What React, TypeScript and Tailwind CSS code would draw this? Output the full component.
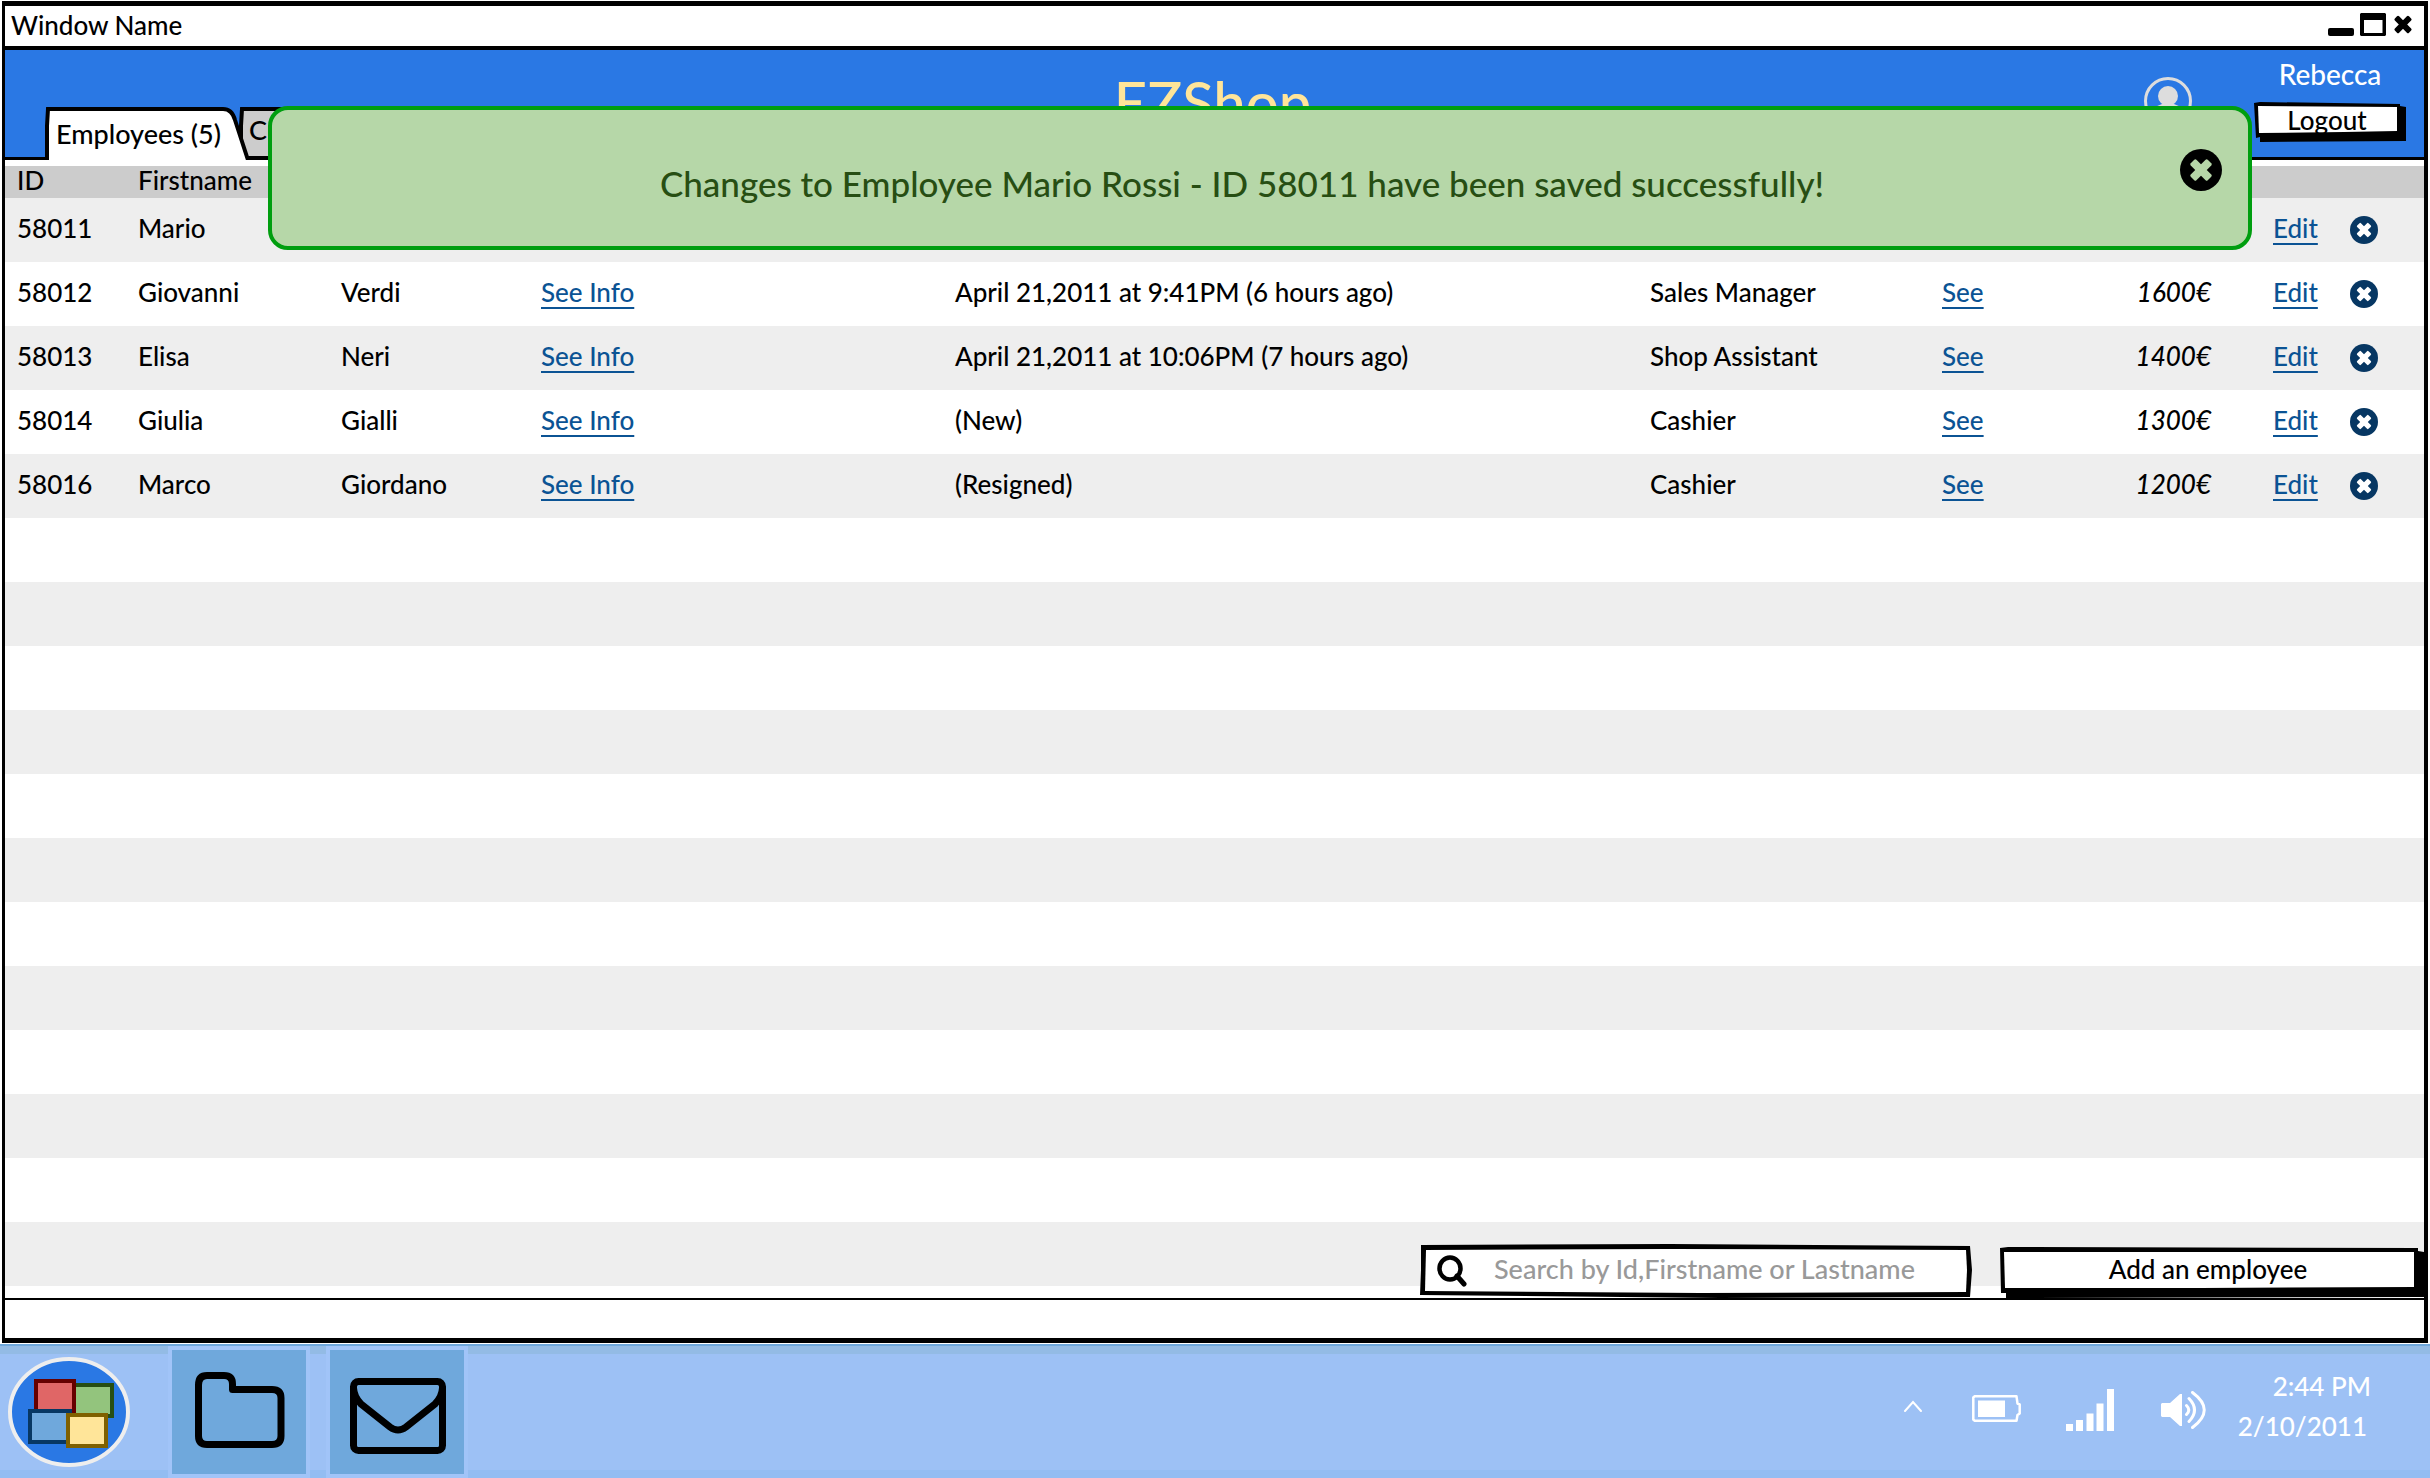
import React from 'react';

type Employee = {
  id: string;
  first: string;
  last: string;
  activity: string;
  role: string;
  salary: string;
};

const employees: Employee[] = [
  { id: '58011', first: 'Mario', last: 'Rossi', activity: '', role: '', salary: '' },
  { id: '58012', first: 'Giovanni', last: 'Verdi', activity: 'April 21,2011 at 9:41PM (6 hours ago)', role: 'Sales Manager', salary: '1600€' },
  { id: '58013', first: 'Elisa', last: 'Neri', activity: 'April 21,2011 at 10:06PM (7 hours ago)', role: 'Shop Assistant', salary: '1400€' },
  { id: '58014', first: 'Giulia', last: 'Gialli', activity: '(New)', role: 'Cashier', salary: '1300€' },
  { id: '58016', first: 'Marco', last: 'Giordano', activity: '(Resigned)', role: 'Cashier', salary: '1200€' },
];

const emptyRows = Array.from({ length: 12 }, (_, i) => i);

function CircleX({ className, cross }: { className: string; cross: string }) {
  return (
    <svg viewBox="0 0 42 42" className={className} aria-hidden="true">
      <circle cx="21" cy="21" r="21" fill="currentColor" />
      <g fill={cross}>
        <rect x="9" y="17" width="24" height="8" rx="1.5" transform="rotate(45 21 21)" />
        <rect x="9" y="17" width="24" height="8" rx="1.5" transform="rotate(-45 21 21)" />
      </g>
    </svg>
  );
}

function TextLink({ children }: { children: React.ReactNode }) {
  return (
    <a href="#" className="text-[#0b5394] underline decoration-2 underline-offset-[5px]">
      {children}
    </a>
  );
}

function TitleBar() {
  return (
    <div className="flex h-11 items-center justify-between border-b-4 border-black bg-white pr-1.5 pb-0.5 pl-1.5">
      <span>Window Name</span>
      <div className="flex items-center gap-1.5">
        <button aria-label="Minimize" className="h-[26px] w-[26px]">
          <svg viewBox="0 0 26 26" aria-hidden="true">
            <rect x="0" y="16" width="26" height="8" rx="2" />
          </svg>
        </button>
        <button aria-label="Maximize" className="h-[26px] w-[26px]">
          <svg viewBox="0 0 26 26" aria-hidden="true">
            <path fillRule="evenodd" d="M1 1H25L26 2V23L25 24H1L0 23V2ZM4 8V21H22.500V8Z" />
          </svg>
        </button>
        <button aria-label="Close window" className="h-[26px] w-[26px]">
          <svg viewBox="0 0 26 26" aria-hidden="true">
            <rect x="1" y="9.500" width="20" height="6" rx="1.500" transform="rotate(45 11 12.500)" />
            <rect x="1" y="9.500" width="20" height="6" rx="1.500" transform="rotate(-45 11 12.500)" />
          </svg>
        </button>
      </div>
    </div>
  );
}

function Header() {
  return (
    <header className="relative flex h-[110px] items-end justify-between border-b-[3px] border-black bg-[#2a78e4]">
      <nav className="-mb-[3px] flex pl-10">
        <button className="relative z-10 flex h-[54px] w-[206px] items-center pt-0.5 pl-[11px] text-[27px]">
          <svg viewBox="0 0 206 54" className="absolute inset-0 h-full w-full" aria-hidden="true">
            <path d="M2 54V20L3 3H178Q187 3 190 14L203 54Z" fill="#fff" />
            <path d="M2 54V20L3 3H178Q187 3 190 14L203 54" fill="none" stroke="#000" strokeWidth="4" />
          </svg>
          <span className="relative">Employees (5)</span>
        </button>
        <button className="relative -ml-3 flex h-[54px] w-[206px] items-center pb-1.5 pl-[10px] text-[27px]">
          <svg viewBox="0 0 206 54" className="absolute inset-0 h-full w-full" aria-hidden="true">
            <path d="M2 52V20L3 3H178Q187 3 190 14L203 52Z" fill="#ccc" stroke="#000" strokeWidth="4" />
          </svg>
          <span className="relative">Customers</span>
        </button>
      </nav>
      <h1 className="absolute inset-x-0 top-4 pr-1 text-center text-[58px] leading-[72px] font-medium text-[#ffe599]">EZShop</h1>
      <div className="flex h-full items-start pr-[18px]">
        <svg viewBox="0 0 48 48" className="mt-[27px] mr-[62px] h-12 w-12" fill="none" aria-hidden="true">
          <circle cx="24" cy="24" r="22.500" stroke="#ddd" strokeWidth="3" />
          <circle cx="24" cy="19" r="10" fill="#ddd" />
          <path d="M9 39Q10 29 18 27H30Q38 29 39 39Q24 52 9 39Z" fill="#ddd" />
        </svg>
        <div className="flex flex-col items-center">
          <span className="mt-2 text-[28px] leading-8 text-white">Rebecca</span>
          <button className="relative mt-3 h-10 w-[152px] pr-1.5 pb-1">
            <svg viewBox="0 0 152 40" preserveAspectRatio="none" className="absolute inset-0 h-full w-full" aria-hidden="true">
              <path d="M0 1L6 0L146 2V4L152 5V39L6 40V35L2 36Z" />
              <path d="M4 4L143 5V29L90 30L5 31Z" fill="#fff" />
            </svg>
            <span className="relative">Logout</span>
          </button>
        </div>
      </div>
    </header>
  );
}

function EmployeeTable() {
  return (
    <table className="w-full table-fixed border-collapse text-left">
      <colgroup>
        <col className="w-[121px]" />
        <col className="w-[203px]" />
        <col className="w-[200px]" />
        <col className="w-[414px]" />
        <col />
        <col className="w-[292px]" />
        <col className="w-[151px]" />
        <col className="w-[180px]" />
        <col className="w-[77px]" />
        <col className="w-[86px]" />
      </colgroup>
      <thead>
        <tr className="h-8 bg-[#ccc]">
          <th className="pb-1 pl-3 leading-7 font-medium">ID</th>
          <th className="pb-1 pl-3 leading-7 font-medium">Firstname</th>
          <th className="pb-1 pl-3 leading-7 font-medium">Lastname</th>
          <th aria-label="Information" />
          <th aria-label="Last activity" />
          <th aria-label="Role" />
          <th aria-label="Details" />
          <th aria-label="Salary" />
          <th aria-label="Edit" />
          <th aria-label="Remove" />
        </tr>
      </thead>
      <tbody>
        {employees.map((e) => (
          <tr key={e.id} className="h-16 odd:bg-[#eee]">
            <td className="pb-1 pl-3">{e.id}</td>
            <td className="pb-1 pl-3">{e.first}</td>
            <td className="pb-1 pl-3">{e.last}</td>
            <td className="pb-1 pl-3"><TextLink>See Info</TextLink></td>
            <td className="pb-1 pl-3">{e.activity}</td>
            <td className="pb-1 pl-3">{e.role}</td>
            <td className="pb-1 pl-3"><TextLink>See</TextLink></td>
            <td className="pr-[50px] pb-1 text-right italic">{e.salary}</td>
            <td className="pb-1 pl-3"><TextLink>Edit</TextLink></td>
            <td className="pl-3">
              <button aria-label={`Remove ${e.first}`} className="block text-[#073763]">
                <CircleX className="h-7 w-7" cross="#fff" />
              </button>
            </td>
          </tr>
        ))}
        {emptyRows.map((i) => (
          <tr key={i} className="h-16 odd:bg-[#eee]">
            <td colSpan={10} />
          </tr>
        ))}
      </tbody>
    </table>
  );
}

function Actions() {
  return (
    <div className="relative -mt-[42px] flex h-[54px] items-start justify-end gap-7">
      <label className="relative flex h-[54px] w-[552px] items-center pl-[17px]">
        <svg viewBox="0 0 552 54" preserveAspectRatio="none" className="absolute inset-0 h-full w-full" aria-hidden="true">
          <path d="M1 1L250 0L550 2L552 26L550 53L300 54L0 51L1 26Z" />
          <path d="M6 6L250 5L546 6L547 26L546 48L280 49L5 47Z" fill="#fff" />
        </svg>
        <svg viewBox="0 0 30 32" className="relative h-8 w-[30px]" fill="none" stroke="#000" aria-hidden="true">
          <ellipse cx="13" cy="13.500" rx="10.500" ry="11" strokeWidth="4.500" />
          <path d="M20 21L27 29" strokeWidth="5" strokeLinecap="round" />
        </svg>
        <input
          type="text"
          aria-label="Search employees"
          placeholder="Search by Id,Firstname or Lastname"
          className="relative ml-[27px] w-[440px] bg-transparent pb-1 text-[27px] outline-none placeholder:text-[#999]"
        />
      </label>
      <button className="relative mt-[3px] h-[51px] w-[424px] pr-2 pb-2">
        <svg viewBox="0 0 424 51" preserveAspectRatio="none" className="absolute inset-0 h-full w-full" aria-hidden="true">
          <path d="M0 1L8 0L418 1V4L424 5V50L6 51V46H1Z" />
          <path d="M4 5L414 5V40L200 41L5 41Z" fill="#fff" />
        </svg>
        <span className="relative">Add an employee</span>
      </button>
    </div>
  );
}

function SuccessBanner() {
  return (
    <div
      role="alert"
      className="absolute top-[106px] right-[178px] left-[268px] z-20 flex h-36 items-center rounded-[20px] border-4 border-[#009e0f] bg-[#b6d7a8] pr-[26px]"
    >
      <p className="flex-1 pt-2.5 pl-8 text-center text-[35px] text-[#274e13]">
        Changes to Employee Mario Rossi - ID 58011 have been saved successfully!
      </p>
      <button aria-label="Dismiss" className="mb-4">
        <CircleX className="h-[42px] w-[42px]" cross="#b6d7a8" />
      </button>
    </div>
  );
}

function Taskbar() {
  return (
    <footer className="mt-px flex grow items-stretch justify-between border-t-2 border-[#6fa8dc] bg-[#9dc1f5] bg-[linear-gradient(#93bbe5_0_8px,#9dc1f5_8px_124px,#93bdf2_124px)] text-white">
      <div className="flex gap-4 pl-2">
        <button aria-label="Start" className="mr-[22px] w-[122px]">
          <svg viewBox="0 0 122 110" className="w-full" strokeWidth="4" aria-hidden="true">
            <ellipse cx="61" cy="55" rx="59" ry="53" fill="#2a78e4" stroke="#eee" />
            <rect x="66" y="28" width="38" height="31" fill="#93c47d" stroke="#274e13" />
            <rect x="28" y="24" width="38" height="32" fill="#e06666" stroke="#660000" />
            <rect x="22" y="54" width="40" height="31" fill="#6fa8dc" stroke="#073763" />
            <rect x="60" y="58" width="38" height="31" fill="#ffe599" stroke="#7f6000" />
          </svg>
        </button>
        <button aria-label="Files" className="flex h-[132px] w-[142px] items-center justify-center border-4 border-[#a1c4f8] bg-[#6fa8dc]">
          <svg viewBox="0 0 90 76" className="mb-1 ml-0.5 h-[76px] w-[90px]" fill="none" stroke="#000" strokeWidth="7" strokeLinejoin="round" aria-hidden="true">
            <path d="M3.500 13Q3.500 3.500 12 3.500H29Q37.500 3.500 37.500 12V17.500H77Q86 17.500 86 26V64Q86 72.500 77 72.500H12Q3.500 72.500 3.500 64Z" />
          </svg>
        </button>
        <button aria-label="Mail" className="flex h-[132px] w-[142px] items-center justify-center border-4 border-[#a1c4f8] bg-[#6fa8dc]">
          <svg viewBox="0 0 96 76" className="mt-2 ml-0.5 h-[76px] w-24" fill="none" stroke="#000" strokeWidth="7" strokeLinejoin="round" aria-hidden="true">
            <rect x="3.500" y="3.500" width="89" height="69" rx="5" />
            <path d="M3.500 10Q4 19 11 26L40 49Q48 55 56 49L85 26Q92 19 92.500 10" />
          </svg>
        </button>
      </div>
      <div className="flex items-center pr-[59px]">
        <svg viewBox="0 0 18 12" className="mr-[50px] mb-3 h-3 w-[18px]" fill="none" stroke="#fff" strokeWidth="2" strokeLinecap="round" aria-label="Show hidden icons">
          <path d="M1 11L9 2L17 11" />
        </svg>
        <svg viewBox="0 0 49 27" className="mr-[45px] mb-2 h-[27px] w-[49px]" fill="none" stroke="#fff" strokeWidth="2.500" strokeLinejoin="round" aria-label="Battery">
          <path d="M2.500 1.300H44.500L45.500 8.500L47.700 9.500V18.500L45.500 20L44.500 25.700H2.500L1.300 24.500V2.500Z" />
          <rect x="6" y="5.500" width="27" height="16.500" fill="#fff" stroke="none" />
        </svg>
        <svg viewBox="0 0 48 42" className="mr-[47px] mb-1 h-[42px] w-12" fill="#fff" aria-label="Signal">
          <path d="M0 35H7V42H0ZM10 31H17V42H10ZM20.500 24.500H27.500V42H20.500ZM30.500 14.500H37.500V42H30.500ZM41 0H48V42H41Z" />
        </svg>
        <svg viewBox="0 0 45 38" className="mr-8 mb-1 h-[38px] w-[45px]" fill="none" stroke="#fff" strokeWidth="3" strokeLinecap="round" aria-label="Volume">
          <path d="M0 13L1 12H9L19 3H21V35H19L9 26H1L0 25Z" fill="#fff" stroke="none" />
          <path d="M25.500 14.500Q30 19 25.500 23.500M28 7.500Q39 19 28 30.500M31.500 1.500Q55 19 31.500 36.500" />
        </svg>
        <div className="mb-3 text-right leading-10">
          <div>2:44 PM</div>
          <div className="pr-1">2/10/2011</div>
        </div>
      </div>
    </footer>
  );
}

export default function App() {
  return (
    <div className="relative flex min-h-screen flex-col bg-white pt-px font-['Lato',sans-serif] text-[26px] leading-9 font-medium text-black">
      <main className="mx-0.5 border-t-[5px] border-r-4 border-b-[5px] border-l-[3px] border-black">
        <TitleBar />
        <Header />
        <div className="pt-1.5">
          <EmployeeTable />
          <Actions />
        </div>
        <div className="h-10 border-t-2 border-black" />
      </main>
      <SuccessBanner />
      <Taskbar />
    </div>
  );
}
